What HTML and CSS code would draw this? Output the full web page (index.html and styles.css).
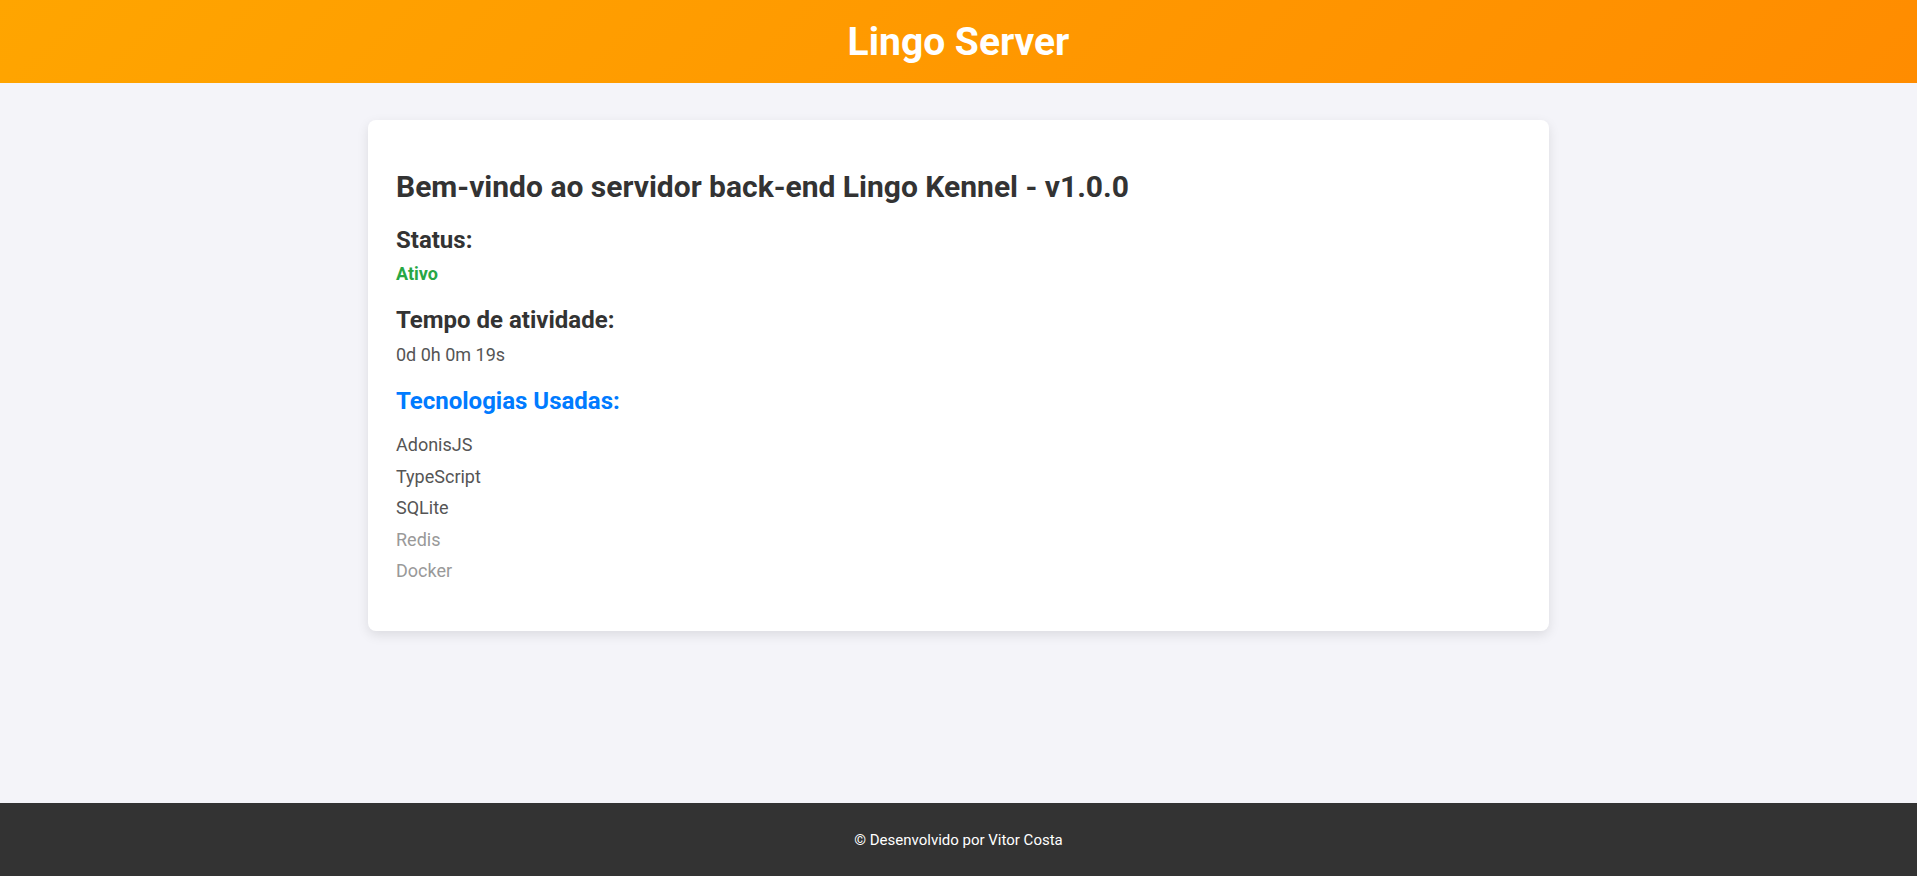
FILE: index.html
```html
<!DOCTYPE html>
<html lang="pt-BR">
<head>
<meta charset="utf-8">
<title>Lingo Server</title>
<link rel="stylesheet" href="styles.css">
</head>
<body>
<header class="topbar">
  <h1 class="brand">Lingo Server</h1>
</header>
<main class="content">
  <section class="card">
    <h2 class="title">Bem-vindo ao servidor back-end Lingo Kennel - v1.0.0</h2>
    <h3 class="label">Status:</h3>
    <p class="status">Ativo</p>
    <h3 class="label label-gap">Tempo de atividade:</h3>
    <p class="uptime">0d 0h 0m 19s</p>
    <h3 class="tech-title">Tecnologias Usadas:</h3>
    <ul class="tech-list">
      <li class="tech">AdonisJS</li>
      <li class="tech">TypeScript</li>
      <li class="tech">SQLite</li>
      <li class="tech tech-faded">Redis</li>
      <li class="tech tech-faded">Docker</li>
    </ul>
  </section>
</main>
<footer class="footer">
  <p class="credit">© Desenvolvido por Vitor Costa</p>
</footer>
</body>
</html>
```
FILE: styles.css
```css
* { box-sizing: border-box; }
html, body { margin: 0; padding: 0; }
body {
  font-family: Roboto, "Liberation Sans", Arial, sans-serif;
  background: #f4f4f9;
  color: #333;
  min-height: 100vh;
  display: flex;
  flex-direction: column;
}
.topbar {
  height: 83px;
  background: linear-gradient(135deg, #ffa500, #ff8c00);
  display: flex;
  align-items: center;
  justify-content: center;
}
.brand {
  margin: 0;
  color: #fff;
  font-size: 39px;
  font-weight: 700;
  line-height: 46px;
}
.content {
  flex: 1;
  display: flex;
  justify-content: center;
  align-items: flex-start;
  padding-top: 37px;
}
.card {
  width: 1181px;
  background: #fff;
  border-radius: 8px;
  box-shadow: 0 4px 12px rgba(0, 0, 0, 0.1);
  padding: 49px 28px 44px;
}
.title {
  margin: 0;
  font-size: 30px;
  line-height: 36px;
  font-weight: 700;
  color: #333;
}
.label {
  margin: 21px 0 0;
  font-size: 24px;
  line-height: 28px;
  font-weight: 700;
  color: #333;
}
.label-gap { margin-top: 21px; }
.status {
  margin: 9px 0 0;
  font-size: 18px;
  line-height: 22px;
  font-weight: 700;
  color: #28a745;
}
.uptime {
  margin: 10px 0 0;
  font-size: 18px;
  line-height: 22px;
  color: #555;
}
.tech-title {
  margin: 21px 0 0;
  font-size: 24px;
  line-height: 28px;
  font-weight: 700;
  color: #007bff;
}
.tech-list {
  list-style: none;
  margin: 14px 0 0;
  padding: 0;
}
.tech {
  font-size: 18px;
  line-height: 31.5px;
  color: #555;
}
.tech-faded { color: #999; }
.footer {
  height: 73px;
  background: #333;
  display: flex;
  align-items: center;
  justify-content: center;
}
.credit {
  margin: 0;
  color: #fff;
  font-size: 15px;
  line-height: 18px;
}
```
